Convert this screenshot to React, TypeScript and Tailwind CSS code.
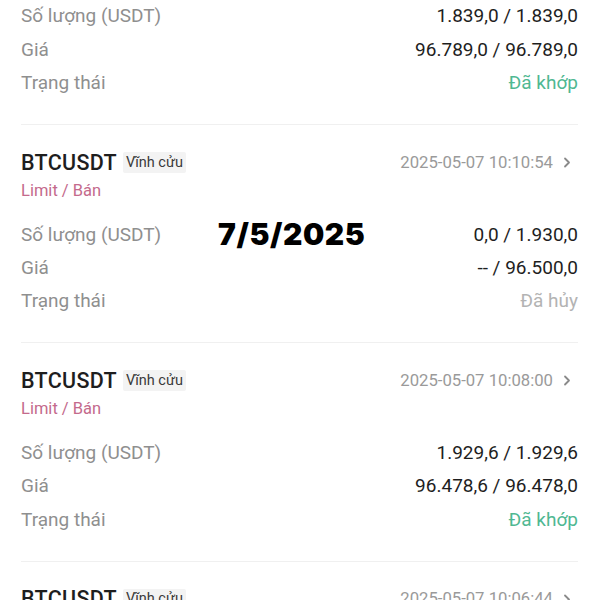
import React from "react";

type Card = {
  date: string;
  qty: string;
  price: string;
  status: string;
  filled: boolean;
};

const cards: Card[] = [
  { date: "2025-05-07 10:12:30", qty: "1.839,0 / 1.839,0", price: "96.789,0 / 96.789,0", status: "Đã khớp", filled: true },
  { date: "2025-05-07 10:10:54", qty: "0,0 / 1.930,0", price: "-- / 96.500,0", status: "Đã hủy", filled: false },
  { date: "2025-05-07 10:08:00", qty: "1.929,6 / 1.929,6", price: "96.478,6 / 96.478,0", status: "Đã khớp", filled: true },
  { date: "2025-05-07 10:06:44", qty: "1.930,0 / 1.930,0", price: "96.480,0 / 96.480,0", status: "Đã khớp", filled: true },
];

function Chevron() {
  return (
    <svg width="8" height="11" viewBox="0 0 8 11" className="ml-[10px] mr-[7px]">
      <polyline points="2,1.5 6,5.5 2,9.5" fill="none" stroke="#8a8a8a" strokeWidth="1.8" strokeLinecap="round" strokeLinejoin="round" />
    </svg>
  );
}

function Row({ label, value, valueClass }: { label: string; value: string; valueClass: string }) {
  return (
    <div className="flex h-[33.4px] items-center justify-between">
      <span className="text-[19px] text-[#8f8f8f]">{label}</span>
      <span className={"text-[19px] " + valueClass}>{value}</span>
    </div>
  );
}

function OrderCard({ c }: { c: Card }) {
  return (
    <div className="border-b border-[#f0f0f0] pt-[23px] pb-[24px]">
      <div className="flex h-[29px] items-center justify-between">
        <div className="flex items-center">
          <span className="text-[21.5px] font-medium tracking-[0.3px] text-[#1e1e1e]">BTCUSDT</span>
          <span className="ml-[6px] flex h-[21px] items-center rounded-[2px] bg-[#f3f3f3] px-[3px] text-[14.5px] text-[#3a3a3a]">
            Vĩnh cửu
          </span>
        </div>
        <div className="flex items-center">
          <span className="text-[16.7px] text-[#9a9a9a]">{c.date}</span>
          <Chevron />
        </div>
      </div>
      <div className="flex h-[29px] items-center">
        <span className="text-[16.5px] text-[#c46a8c]">Limit / Bán</span>
      </div>
      <div className="mt-[12px]">
        <Row label="Số lượng (USDT)" value={c.qty} valueClass="text-[#1e1e1e]" />
        <Row label="Giá" value={c.price} valueClass="text-[#1e1e1e]" />
        <Row
          label="Trạng thái"
          value={c.status}
          valueClass={c.filled ? "text-[#4fb892]" : "text-[#b3b3b3]"}
        />
      </div>
    </div>
  );
}

export default function App() {
  return (
    <div
      className="relative h-[600px] w-[600px] overflow-hidden bg-white"
      style={{ fontFamily: "Roboto, 'Noto Sans', sans-serif" }}
    >
      <div className="-mt-[93px] pl-[21px] pr-[22px]">
        {cards.map((c, i) => (
          <OrderCard key={i} c={c} />
        ))}
      </div>
      <div
        className="absolute left-[218px] top-[212px] text-[30px] font-black tracking-[0.6px] text-black"
        style={{ fontFamily: "Inter, sans-serif" }}
      >
        7/5/2025
      </div>
    </div>
  );
}
